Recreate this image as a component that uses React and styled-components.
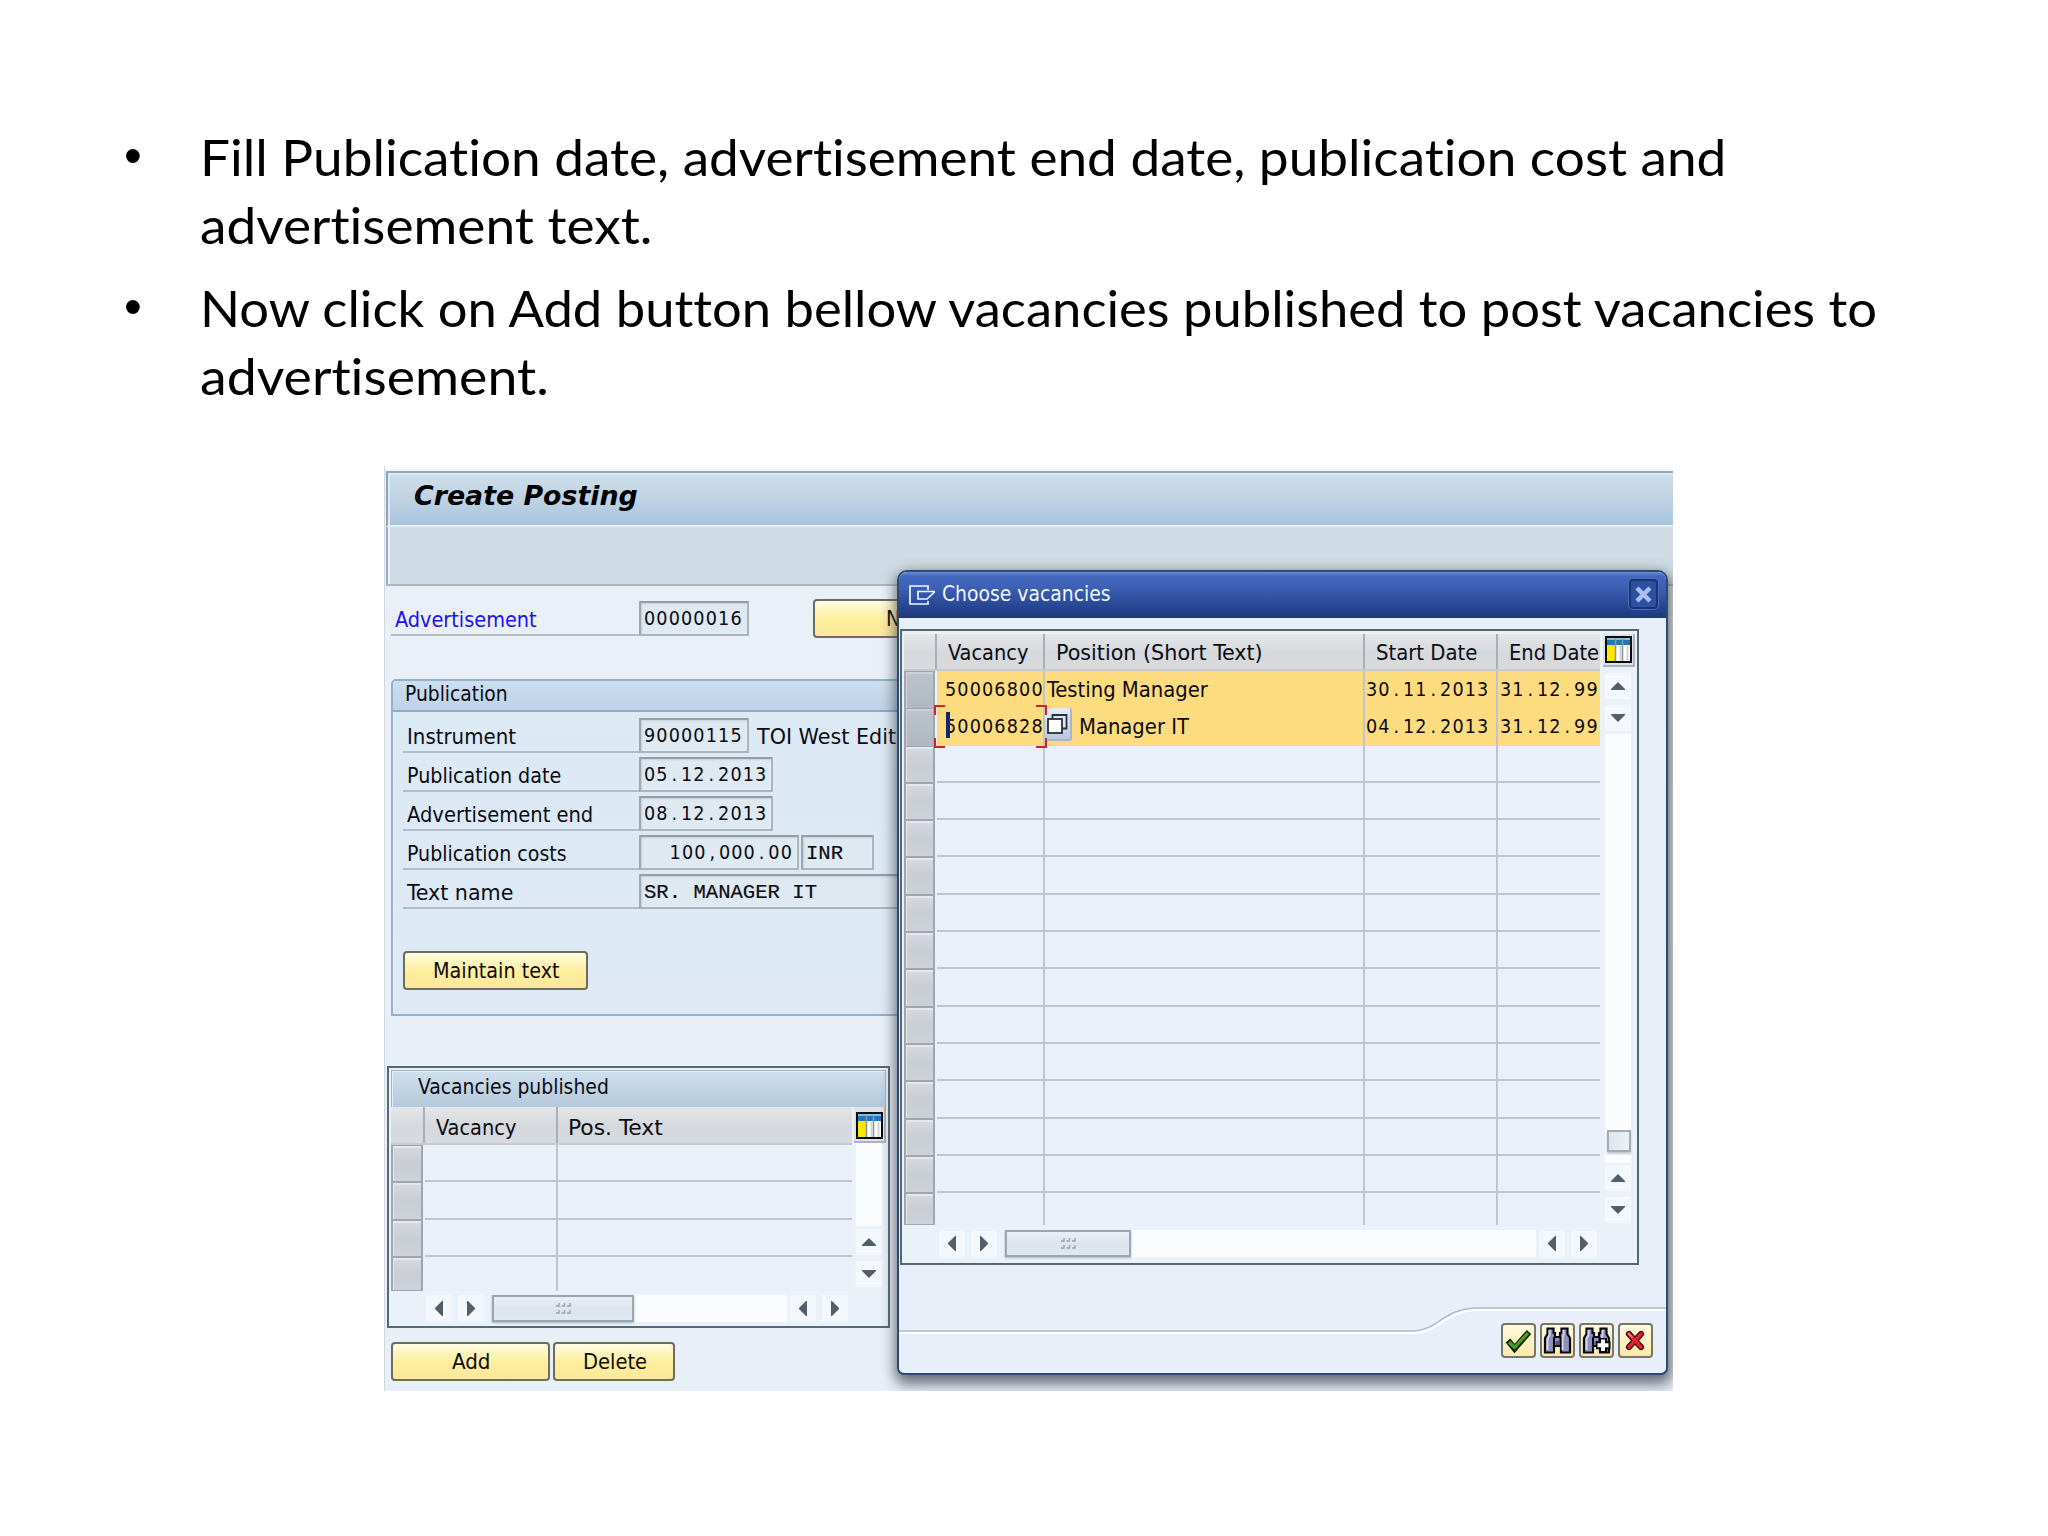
import React, { useLayoutEffect, useRef, useState } from 'react';
import styled, { createGlobalStyle } from 'styled-components';

const sans = '"DejaVu Sans Condensed", "DejaVu Sans", sans-serif';
const line = '#bfc4cd';
const marker = 'linear-gradient(#d6d9de, #c9cdd4 50%, #cdd2da)';

const GlobalStyle = createGlobalStyle`
  * { box-sizing: border-box; }
  html, body { margin: 0; background: #fff; }
  body { overflow: hidden; font-family: ${sans}; }
`;

const Slide = styled.main`
  width: 2048px;
  height: 1536px;
  padding: 122px 0 0 124px;
  background: #fff;
  overflow: hidden;
`;

const Bullets = styled.ul`
  height: 344px;
  margin: 0;
  padding: 0;
  list-style: none;
  display: flex;
  flex-direction: column;
  gap: 14px;
`;

const Bullet = styled.li`
  display: grid;
  grid-template-columns: 76px 1fr;
  font: 51px/68px Lato, sans-serif;
  font-variant-ligatures: none;
  color: #000;
`;

const Dot = styled.span`
  font-family: "Liberation Sans", sans-serif;
`;

const Lines = styled.div`
  display: flex;
  flex-direction: column;
  padding-top: 1px;
`;

const FitBox = styled.span`
  display: inline-block;
  white-space: pre;
`;

const FitInner = styled.span`
  display: inline-block;
  transform-origin: 0 50%;
`;

function Fit({ w, children }) {
  const ref = useRef(null);
  const [scale, setScale] = useState(1);
  useLayoutEffect(() => {
    setScale(w / ref.current.offsetWidth);
  }, [w, children]);
  return (
    <FitBox style={{ width: w }}>
      <FitInner ref={ref} style={{ transform: `scaleX(${scale})` }}>{children}</FitInner>
    </FitBox>
  );
}

const CodeText = styled.span`
  font-family: ${p => (p.$slab ? '"Liberation Mono", monospace' : sans)};
  font-size: ${p => (p.$slab ? 20.6 : 19.6)}px;
  letter-spacing: ${p => (p.$slab ? 0 : 1.13)}px;
  line-height: 1;
  vertical-align: 1px;
  white-space: pre;
  -webkit-text-stroke: ${p => (p.$slab ? '0.2px #111' : '0')};
`;

const Sep = styled.span`
  display: inline-block;
  width: 12.35px;
  text-align: center;
`;

function Code({ slab, children }) {
  if (slab) return <CodeText $slab>{children}</CodeText>;
  return (
    <CodeText>
      {children.split(/([.,])/).map((part, i) => (i % 2 ? <Sep key={i}>{part}</Sep> : part))}
    </CodeText>
  );
}

const Screen = styled.section`
  position: relative;
  width: 1289px;
  height: 925px;
  margin-left: 260px;
  padding: 5px 0 0 1px;
  border-left: 1px solid #d3d7dd;
  overflow: hidden;
  background: linear-gradient(#fff, #f1f3f9 5px, #ebf0f7 6px, #e9eff7);
  font-size: 21px;
  color: #0b0b12;
`;

const TitleBar = styled.header`
  height: 56px;
  padding: 0 0 6px 26px;
  display: flex;
  align-items: center;
  border-top: 2px solid #98a8bd;
  border-left: 2px solid #8fa3b6;
  border-bottom: 2px solid #e8f0f6;
  background: linear-gradient(#cfdeeb, #c3d5e4 40%, #a9c4de);
  box-shadow: inset 2px 2px 0 #dce8f2;
  font: italic bold 27px/30px ${sans};
  color: #000;
`;

const Toolbar = styled.div`
  height: 59px;
  border-left: 2px solid #9aacbb;
  border-bottom: 2px solid #aab8c4;
  background: #d0dce5;
  box-shadow: inset 2px 0 0 #edf3f7;
`;

const Content = styled.div`
  padding: 15px 0 0 5px;
`;

const Row = styled.div`
  display: flex;
  height: 35px;
  align-items: stretch;
`;

const Label = styled.div`
  width: ${p => p.$w}px;
  padding: 4.5px 0 0 4px;
  line-height: 28px;
  border-bottom: 2px solid #b4bcc7;
  color: ${p => p.$color || '#0b0b12'};
`;

const Field = styled.div`
  width: ${p => p.$w}px;
  margin-right: 2px;
  padding: 2px ${p => (p.$right ? 4 : 0)}px 0 3px;
  line-height: 29px;
  text-align: ${p => (p.$right ? 'right' : 'left')};
  border: 2px solid #abb3bb;
  border-top-color: #949da5;
  border-left-color: #9fa8b0;
  background: #dfe9f1;
  box-shadow: inset 1px 1px 2px #c6cfd6, inset -1px -1px 1px #e7eef4;
  overflow: hidden;
  white-space: nowrap;
`;

const Trailing = styled.span`
  padding: 4.5px 0 0 6px;
  line-height: 28px;
`;

const Button = styled.button`
  width: ${p => p.$w}px;
  height: 39px;
  padding: 0;
  display: flex;
  align-items: center;
  justify-content: center;
  border: 2px solid #6d6c5e;
  border-radius: 4px;
  background: linear-gradient(#fffbe2, #fdf2b2 35%, #ffee9b 55%, #fce79a);
  font: 21px/26px ${sans};
  color: #0b0b12;
`;

const NewButton = styled(Button)`
  margin: -2px 0 0 62px;
`;

const Group = styled.section`
  width: 900px;
  height: 337px;
  margin-top: 43px;
  border: 2px solid #93b0cf;
  border-radius: 5px 5px 0 0;
  background: linear-gradient(#dceaf6, #dee9f5);
  box-shadow: inset 1px 1px 0 #eaf3fa;
  overflow: hidden;
`;

const GroupHead = styled.div`
  height: 31px;
  padding: 0 0 0 12px;
  line-height: 26px;
  border-bottom: 2px solid #8fabc9;
  background: linear-gradient(#cddeee, #bdd2e8);
`;

const GroupBody = styled.div`
  padding: 6px 0 0 10px;
  display: flex;
  flex-direction: column;
  gap: 4.1px;
`;

const MaintainButton = styled(Button)`
  margin-top: 38px;
`;

const Published = styled.section`
  width: 503px;
  height: 262px;
  margin: 50px 0 0 -4px;
  padding: 2px;
  border: 2px solid #566a76;
  background: #eaf1f8;
`;

const PublishedHead = styled.div`
  height: 37px;
  padding: 0 0 0 26px;
  line-height: 32px;
  border: solid #9fb1c2;
  border-width: 1px 1px 0 1px;
  background: linear-gradient(#cfdfec, #b5c9dc);
  box-shadow: inset 1px 1px 0 #e6eff7;
`;

const Area = styled.div`
  display: grid;
  grid-template-columns: ${p => p.$main}px 1fr;
`;

const Head = styled.div`
  height: ${p => p.$h}px;
  display: grid;
  grid-template-columns: ${p => p.$cols};
  background: linear-gradient(#e4e6e9, #d5d8dc 55%, #d8dadf);
  border-bottom: 2px solid #c5c9d0;
`;

const HeadCell = styled.div`
  padding: ${p => p.$top || 5}px 0 0 ${p => p.$pad || 0}px;
  line-height: 28px;
  white-space: nowrap;
  border-right: ${p => (p.$last ? 0 : 2)}px solid #a9aeb8;
`;

const Line = styled.div`
  height: ${p => p.$h}px;
  display: grid;
  grid-template-columns: ${p => p.$cols};
`;

const Marker = styled.div`
  border: solid #a0a5b0;
  border-width: 1px 2px 1px 2px;
  background: ${p => (p.$on ? 'linear-gradient(#bcc3ca, #afb8c2)' : marker)};
  box-shadow: inset 1px 2px 0 ${p => (p.$on ? '#ccd2d8' : '#e4e7eb')};
  margin-right: 2px;
`;

const Cell = styled.div`
  position: relative;
  padding: 0 0 0 ${p => p.$pad || 0}px;
  line-height: 38px;
  white-space: nowrap;
  border-right: ${p => (p.$last ? 0 : 2)}px solid ${line};
  border-bottom: ${p => (p.$end ? 0 : 2)}px solid ${line};
  background: ${p => (p.$on ? '#fddc80' : '#e9f0f8')};
`;

const Side = styled.div`
  display: flex;
  flex-direction: column;
  align-items: flex-start;
  padding-left: ${p => p.$pad}px;
`;

const ConfigBox = styled.div`
  height: ${p => p.$h}px;
  width: 32px;
  margin-left: -2px;
  padding: ${p => p.$top}px 0 0 2px;
  background: #dfe2e6;
  border: solid #adb2bb;
  border-width: 0 2px 2px 0;
`;

const ArrowBox = styled.div`
  width: 26px;
  height: 26px;
  margin: ${p => p.$m || '0'};
  display: flex;
  align-items: center;
  justify-content: center;
  background: #f4f7fb;
`;

const VTrack = styled.div`
  width: 26px;
  height: ${p => p.$h}px;
  padding: ${p => p.$top || 0}px 0 0 2px;
  margin-top: ${p => p.$mt || 0}px;
  background: #fbfcfe;
`;

const VThumb = styled.div`
  height: 22px;
  border: 2px solid #a3abb8;
  background: linear-gradient(90deg, #dfe5ec, #edf1f6);
  box-shadow: 0 2px 2px #c4c8ce;
`;

const HScroll = styled.div`
  display: flex;
  align-items: center;
  height: 27px;
  margin: ${p => p.$m};
`;

const HTrack = styled.div`
  width: ${p => p.$w}px;
  height: 27px;
  margin: 0 3px 0 8px;
  background: #fbfcfe;
`;

const HThumb = styled.div`
  width: ${p => p.$w}px;
  height: 27px;
  display: flex;
  align-items: center;
  justify-content: center;
  border: 2px solid #9ca6b3;
  background: linear-gradient(#e9eff6, #dce4ed 50%, #dfe7ef);
  box-shadow: 0 1px 2px #aeb4bc;
`;

const Actions = styled.div`
  display: flex;
  gap: 3px;
  margin: 14px 0 0;
`;

const Dialog = styled.section`
  position: absolute;
  left: 512px;
  top: 104px;
  width: 771px;
  height: 805px;
  border: 2px solid #2c4a78;
  border-radius: 10px 10px 7px 7px;
  background: #e9eff8;
  box-shadow: 1px 6px 14px 3px rgba(60, 66, 72, 0.75);
`;

const DialogTitle = styled.header`
  height: 46px;
  padding: 0 8px 0 10px;
  display: flex;
  align-items: center;
  border-radius: 8px 8px 0 0;
  background: linear-gradient(#6d8bd0 0, #4568c0 4px, #3f62b8 30%, #2a4a98 70%, #1d3778);
  color: #f2f5fc;
`;

const DialogName = styled.div`
  flex: 1;
  padding: 0 0 2px 6px;
  line-height: 26px;
`;

const Close = styled.div`
  width: 29px;
  height: 30px;
  margin-bottom: 2px;
  display: flex;
  align-items: center;
  justify-content: center;
  border: 2px solid #1b3474;
  border-radius: 4px;
  background: #2f50a0;
  box-shadow: 0 0 0 1px #4c6cba;
`;

const Choose = styled.div`
  width: 739px;
  height: 636px;
  margin: 11px 0 0 1px;
  padding: 3px 0 0 2px;
  border: 2px solid #56686f;
  background: #eaf1f8;
`;

const Footer = styled.footer`
  position: relative;
  height: 108px;
  padding: 58px 0 0 602px;
  display: flex;
  gap: 4px;
`;

const Curve = styled.svg`
  position: absolute;
  left: 0;
  top: 40px;
`;

const IconButton = styled.div`
  width: 35px;
  height: 35px;
  display: flex;
  align-items: center;
  justify-content: center;
  border: 2px solid #77766b;
  border-radius: 4px;
  background: linear-gradient(#fffae0, #fbeaa6);
`;

const Caret = styled.i`
  position: absolute;
  left: 9px;
  top: 4px;
  width: 4px;
  height: 26px;
  background: #10286e;
`;

const Corners = styled.svg`
  position: absolute;
  left: -3px;
  top: -3px;
  z-index: 2;
`;

const Lookup = styled.span`
  display: inline-flex;
  vertical-align: top;
  align-items: center;
  justify-content: center;
  width: 27px;
  height: 33px;
  margin-right: 7px;
  border: solid #a8b4cc;
  border-width: 0 2px 2px 0;
  border-radius: 0 3px 3px 0;
  background: linear-gradient(#e6ebf3, #b9c8e4);
`;

const arrows = {
  up: 'M7 0L14 7V8H0V7Z',
  down: 'M0 0H14V1L7 8L0 1Z',
  left: 'M8 0V15H7L0 8V7L7 0Z',
  right: 'M0 0V15H1L8 8V7L1 0Z',
};

function Arrow({ dir, m }) {
  const flat = dir === 'up' || dir === 'down';
  return (
    <ArrowBox $m={m}>
      <svg width={flat ? 14 : 8} height={flat ? 8 : 15}><path d={arrows[dir]} fill="#525e69" /></svg>
    </ArrowBox>
  );
}

function Grip() {
  return (
    <svg width="15" height="13" fill="none" stroke="#9aa3ae" strokeWidth="1.4">
      {[0, 5.5, 11].map(x => [0, 7].map(y => <path key={`${x}-${y}`} d={`M${x} ${y + 4}H${x + 3}V${y + 1}`} />))}
    </svg>
  );
}

const ColumnsSvg = styled.svg`
  display: block;
`;

function ColumnsIcon() {
  return (
    <ColumnsSvg width="27" height="27">
      <rect width="27" height="27" fill="#08090c" />
      <rect x="2" y="2" width="23" height="23" fill="#fff" />
      <rect x="2" y="3" width="23" height="6" fill="#2277b8" />
      <path d="M2 3H25" stroke="#86bde0" strokeWidth="2" />
      <rect x="2" y="9" width="8" height="16" fill="#ffe600" />
      <path d="M10.5 3V25M17.5 3V25" stroke="#8d949b" strokeWidth="1.6" />
      <path d="M15.5 10V25M22.5 10V25" stroke="#d0d3d6" strokeWidth="2" />
    </ColumnsSvg>
  );
}

function Binoculars({ plus }) {
  return (
    <svg width="29" height="29" viewBox="0 0 29 29">
      <path d="M4.5 2.5H10.5V7H12V11H17V7H18.5V2.5H24.5V8L27 12V26.5H18V20H11V26.5H2V12L4.5 8Z" fill="#8f8fbd" stroke="#08080c" strokeWidth="2.2" />
      <path d="M6.5 4V9L4.5 13V24M20.5 4V9L19.5 13V24" stroke="#d5d5ea" strokeWidth="2" fill="none" />
      <path d="M11 11V21M17.5 11V21" stroke="#08080c" strokeWidth="2" />
      <rect x="12.5" y="15" width="4" height="4" fill="#55557a" />
      {plus && <path d="M21 12V27M14 19.2H28.5" stroke="#08080c" strokeWidth="8" />}
      {plus && <path d="M21 13.5V25M15.5 19.2H26.5" stroke="#fff" strokeWidth="4" />}
    </svg>
  );
}

function Check() {
  return (
    <svg width="29" height="29" viewBox="0 0 29 29" fill="none">
      <path d="M4 14.5L10.5 22.5L25 6" stroke="#10220a" strokeWidth="6" />
      <path d="M5 16L10.5 21.5L24 7" stroke="#4c9d1e" strokeWidth="3.2" />
    </svg>
  );
}

function Cross() {
  return (
    <svg width="29" height="29" viewBox="0 0 29 29" fill="none" strokeLinecap="round">
      <path d="M8 8L20 21M20 8L8 21" stroke="#3c0709" strokeWidth="6.2" />
      <path d="M8 8L20 21M20 8L8 21" stroke="#e0202c" strokeWidth="3.6" />
      <path d="M7.5 7.5L11 11" stroke="#f58d90" strokeWidth="1.5" />
    </svg>
  );
}

function ExitIcon() {
  return (
    <svg width="27" height="20" viewBox="0 0 27 20" fill="none" stroke="#f2f5fc" strokeWidth="1.7">
      <path d="M19 5V1H1V19H19V16" />
      <path d="M26 6.5H9V14H18L25.5 7" />
    </svg>
  );
}

function LookupIcon() {
  return (
    <svg width="21" height="20" viewBox="0 0 21 20" fill="none" stroke="#26323c" strokeWidth="1.8">
      <path d="M5.5 5V1H19.5V14.5H15.5" fill="#dfe6f0" />
      <rect x="1" y="5" width="14" height="14" fill="#fff" />
    </svg>
  );
}

const vacancies = [
  { id: '50006800', w: 161, name: 'Testing Manager', start: '30.11.2013', end: '31.12.99' },
  { id: '50006828', w: 110, name: 'Manager IT', start: '04.12.2013', end: '31.12.99', active: true },
];

const chooseCols = '33px 108px 320px 133px 1fr';
const publishedCols = '34px 133px 1fr';

function VacancyLine({ row, end }) {
  const on = !!row;
  return (
    <Line $h={end ? 32 : 37.3} $cols={chooseCols}>
      <Marker $on={on} />
      <Cell $on={on} $end={end} $pad={8}>
        {row?.active && <Caret />}
        {row && <Code>{row.id}</Code>}
        {row?.active && (
          <Corners width="113" height="43" fill="none" stroke="#d2232f" strokeWidth="2">
            <path d="M11 1H1V10M102 1H112V10M1 33V42H11M112 33V42H102" />
          </Corners>
        )}
      </Cell>
      <Cell $on={on} $end={end} $pad={row?.active ? 0 : 2}>
        {row?.active && <Lookup><LookupIcon /></Lookup>}
        {row && <Fit w={row.w}>{row.name}</Fit>}
      </Cell>
      <Cell $on={on} $end={end} $pad={1}>{row && <Code>{row.start}</Code>}</Cell>
      <Cell $on={on} $end={end} $pad={2} $last>{row && <Code>{row.end}</Code>}</Cell>
    </Line>
  );
}

export default function App() {
  return (
    <Slide>
      <GlobalStyle />
      <Bullets>
        <Bullet>
          <Dot>•</Dot>
          <Lines>
            <span><Fit w={1526}>Fill Publication date, advertisement end date, publication cost and</Fit></span>
            <span><Fit w={452}>advertisement text.</Fit></span>
          </Lines>
        </Bullet>
        <Bullet>
          <Dot>•</Dot>
          <Lines>
            <span><Fit w={1677}>Now click on Add button bellow vacancies published to post vacancies to</Fit></span>
            <span><Fit w={349}>advertisement.</Fit></span>
          </Lines>
        </Bullet>
      </Bullets>

      <Screen>
        <TitleBar><Fit w={224}>Create Posting</Fit></TitleBar>
        <Toolbar />
        <Content>
          <Row>
            <Label $w={248} $color="#1a12f0"><Fit w={142}>Advertisement</Fit></Label>
            <Field $w={110}><Code>00000016</Code></Field>
            <NewButton $w={188}><Fit w={42}>New</Fit></NewButton>
          </Row>
          <Group>
            <GroupHead><Fit w={103}>Publication</Fit></GroupHead>
            <GroupBody>
              <Row>
                <Label $w={236}><Fit w={109}>Instrument</Fit></Label>
                <Field $w={110}><Code>90000115</Code></Field>
                <Trailing><Fit w={171}>TOI West Edition</Fit></Trailing>
              </Row>
              <Row>
                <Label $w={236}><Fit w={154}>Publication date</Fit></Label>
                <Field $w={134}><Code>05.12.2013</Code></Field>
              </Row>
              <Row>
                <Label $w={236}><Fit w={186}>Advertisement end</Fit></Label>
                <Field $w={134}><Code>08.12.2013</Code></Field>
              </Row>
              <Row>
                <Label $w={236}><Fit w={160}>Publication costs</Fit></Label>
                <Field $w={160} $right><Code>100,000.00</Code></Field>
                <Field $w={73}><Code slab>INR</Code></Field>
              </Row>
              <Row>
                <Label $w={236}><Fit w={106}>Text name</Fit></Label>
                <Field $w={400}><Code slab>SR. MANAGER IT</Code></Field>
              </Row>
              <MaintainButton $w={185}><Fit w={127}>Maintain text</Fit></MaintainButton>
            </GroupBody>
          </Group>

          <Published>
            <PublishedHead><Fit w={191}>Vacancies published</Fit></PublishedHead>
            <Area $main={461}>
              <div>
                <Head $h={38} $cols={publishedCols}>
                  <HeadCell />
                  <HeadCell $pad={11} $top={6.5}><Fit w={80}>Vacancy</Fit></HeadCell>
                  <HeadCell $pad={10} $top={6.5} $last><Fit w={95}>Pos. Text</Fit></HeadCell>
                </Head>
                {[0, 1, 2, 3].map(i => (
                  <Line key={i} $h={i === 3 ? 34 : 37.3} $cols={publishedCols}>
                    <Marker />
                    <Cell $end={i === 3} />
                    <Cell $end={i === 3} $last />
                  </Line>
                ))}
              </div>
              <Side $pad={4}>
                <ConfigBox $h={36} $top={5}><ColumnsIcon /></ConfigBox>
                <VTrack $h={83} />
                <Arrow dir="up" m="3px 0 6px" />
                <Arrow dir="down" m="0 0 1px" />
              </Side>
            </Area>
            <HScroll $m="4px 0 0 35px">
              <Arrow dir="left" m="0 6px 0 0" />
              <Arrow dir="right" />
              <HTrack $w={295}><HThumb $w={142}><Grip /></HThumb></HTrack>
              <Arrow dir="left" m="0 6px 0 0" />
              <Arrow dir="right" />
            </HScroll>
          </Published>
          <Actions>
            <Button $w={159}><Fit w={39}>Add</Fit></Button>
            <Button $w={122}><Fit w={64}>Delete</Fit></Button>
          </Actions>
        </Content>

        <Dialog>
          <DialogTitle>
            <ExitIcon />
            <DialogName><Fit w={169}>Choose vacancies</Fit></DialogName>
            <Close>
              <svg width="17" height="17" stroke="#a9c0f5" strokeWidth="4.5"><path d="M2 2L15 15M15 2L2 15" /></svg>
            </Close>
          </DialogTitle>
          <Choose>
            <Area $main={696}>
              <div>
                <Head $h={37} $cols={chooseCols}>
                  <HeadCell />
                  <HeadCell $pad={11}><Fit w={80}>Vacancy</Fit></HeadCell>
                  <HeadCell $pad={11}><Fit w={207}>Position (Short Text)</Fit></HeadCell>
                  <HeadCell $pad={11}><Fit w={101}>Start Date</Fit></HeadCell>
                  <HeadCell $pad={11} $last><Fit w={90}>End Date</Fit></HeadCell>
                </Head>
                {Array.from({ length: 15 }, (_, i) => <VacancyLine key={i} row={vacancies[i]} end={i === 14} />)}
              </div>
              <Side $pad={5}>
                <ConfigBox $h={33} $top={2}><ColumnsIcon /></ConfigBox>
                <Arrow dir="up" m="6px 0" />
                <Arrow dir="down" />
                <VTrack $h={429} $mt={3} $top={396}><VThumb /></VTrack>
                <Arrow dir="up" m="2px 0 6px" />
                <Arrow dir="down" />
              </Side>
            </Area>
            <HScroll $m="5px 0 0 35px">
              <Arrow dir="left" m="0 6px 0 0" />
              <Arrow dir="right" />
              <HTrack $w={531}><HThumb $w={126}><Grip /></HThumb></HTrack>
              <Arrow dir="left" m="0 6px 0 0" />
              <Arrow dir="right" />
            </HScroll>
          </Choose>
          <Footer>
            <Curve width="767" height="32" fill="none">
              <path d="M0 28H516C540 28 545 5 580 5H767" stroke="#fff" strokeWidth="2" />
              <path d="M0 26H516C540 24 545 3 580 3H767" stroke="#b3bbc8" strokeWidth="1.6" />
            </Curve>
            <IconButton><Check /></IconButton>
            <IconButton><Binoculars /></IconButton>
            <IconButton><Binoculars plus /></IconButton>
            <IconButton><Cross /></IconButton>
          </Footer>
        </Dialog>
      </Screen>
    </Slide>
  );
}
